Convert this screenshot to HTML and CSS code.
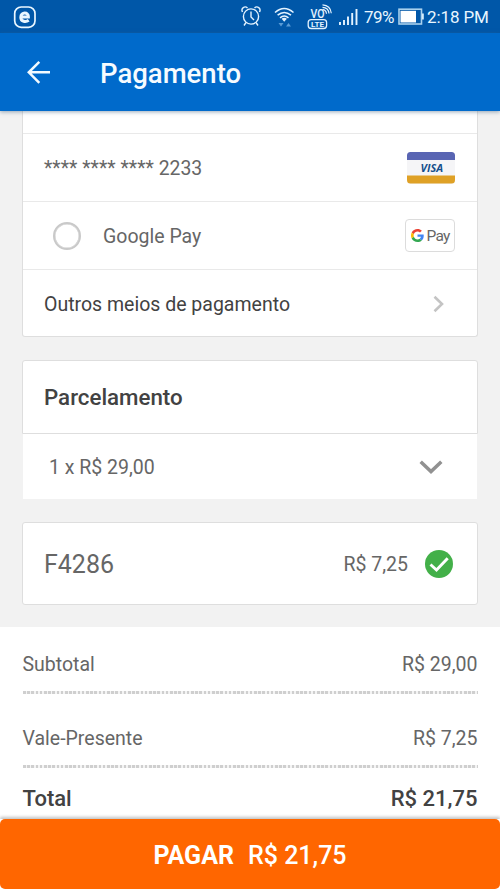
FILE: index.html
```html
<!DOCTYPE html>
<html lang="pt-BR">
<head>
<meta charset="utf-8">
<title>Pagamento</title>
<link rel="stylesheet" href="styles.css">
</head>
<body>
<div class="screen">
  <div class="status">
    <svg class="app-icon" width="24" height="24" viewBox="0 0 24 24" fill="none" stroke="#eaf7ff"><rect x="1.700" y="2" width="20.300" height="20.300" rx="6.500" stroke-width="1.700"/><path d="M8.300 12H15.400C15.700 6.600 7.800 6.700 7.800 12.200C7.800 17 12.900 17.300 15.700 15.300" stroke-width="3"/></svg>
    <svg class="status-icons" width="122" height="33" viewBox="0 0 122 33" fill="none" stroke="#e4f3ff" stroke-width="1.4">
      <circle cx="12" cy="16.5" r="7.6"/><path d="M12 11.5V17l3 3M3.5 12C1.5 8 6 5.500 8.500 8M20.500 12C22.500 8 18 5.500 15.500 8M7 22.500l-2 3M17 22.500l2 3"/>
      <path d="M36 12.500Q45.200 4.500 54.500 12.500M38.600 15.200Q45.200 9.700 52 15.200M41 17.800Q45.200 14.400 49.500 17.800" stroke-width="1.500"/><path d="M42.600 18.700Q45.200 17 47.900 18.700L45.200 21.700z" fill="#e4f3ff" stroke="none"/><path d="M39.500 23h5L42 26.500zM47 26.500h5L49.500 23z" fill="#5a9bd5" stroke="none"/>
      <text class="volte-top" x="71.500" y="18.200" textLength="14" lengthAdjust="spacingAndGlyphs">VO</text>
      <path d="M83.500 9.700q3.500 0 4 4M83.500 7.300q6 .3 6.500 6.200M83.500 4.900q8 .5 8.800 8.300" stroke-width="1.200"/>
      <rect x="69.200" y="19.600" width="18.400" height="8.900" rx="3" stroke-width="1.300"/><text class="volte-bottom" x="72" y="27.100" textLength="13" lengthAdjust="spacingAndGlyphs">LTE</text>
      <path d="M101 22v3M105 20v5M109 16.500v8.500M113.200 13v12M117.500 9v16" stroke-width="1.900"/>
    </svg>
    <span class="percent">79%</span>
    <svg class="battery" width="27" height="18" viewBox="0 0 27 18"><rect x="1" y="1.200" width="22.500" height="14.800" fill="none" stroke="#a9d1ed" stroke-width="1.600"/><rect x="2.500" y="2.800" width="15.500" height="11.700" fill="#fff"/><path d="M24 5.500h1.800v6H24z" fill="#d6edfc"/></svg>
    <span class="time">2:18 PM</span>
  </div>
  <header class="appbar">
    <svg class="back" width="24" height="24" viewBox="0 0 24 24" fill="none" stroke="#f2faff" stroke-width="2.500"><path d="M23 12.300H2M12.300 1.800L1.800 12.300 12.300 22.800"/></svg>
    <h1 class="title">Pagamento</h1>
  </header>
  <main class="content">
    <section class="card methods">
      <div class="row stub"></div>
      <div class="row"><span class="mask">**** **** **** 2233</span>
        <svg class="visa" width="48" height="32" viewBox="0 0 48 32"><rect width="48" height="32" rx="3.500" fill="#f5f5f7"/><path d="M0 8V3.500A3.500 3.500 0 0 1 3.500 0h41A3.500 3.500 0 0 1 48 3.500V8z" fill="#5965b3"/><path d="M0 23.500v4.500A3.500 3.500 0 0 0 3.500 31.500h41a3.500 3.500 0 0 0 3.500-3.500v-4.500z" fill="#dfa126"/><text class="visa-text" x="13.500" y="19.700" textLength="22.500" lengthAdjust="spacingAndGlyphs">VISA</text></svg>
      </div>
      <div class="row"><span class="radio"></span><span class="gpay-label">Google Pay</span>
        <span class="gpay"><svg width="13" height="13" viewBox="0 0 48 48"><path fill="#ea4335" d="M24 9.500c3.540 0 6.710 1.220 9.210 3.600l6.850-6.850C35.900 2.380 30.470 0 24 0 14.620 0 6.510 5.380 2.560 13.220l7.980 6.190C12.430 13.720 17.740 9.500 24 9.500z"/><path fill="#4285f4" d="M46.980 24.550c0-1.570-.15-3.090-.38-4.550H24v9.020h12.940c-.58 2.960-2.260 5.480-4.780 7.180l7.730 6c4.510-4.180 7.090-10.360 7.090-17.650z"/><path fill="#fbbc05" d="M10.530 28.590c-.48-1.450-.76-2.990-.76-4.590s.27-3.140.76-4.590l-7.980-6.190C.92 16.460 0 20.120 0 24s.92 7.540 2.560 10.780z"/><path fill="#34a853" d="M24 48c6.480 0 11.930-2.130 15.890-5.810l-7.730-6c-2.150 1.450-4.920 2.300-8.160 2.300-6.260 0-11.570-4.220-13.470-9.910l-7.980 6.190C6.510 42.620 14.620 48 24 48z"/></svg><span class="gpay-word">Pay</span></span>
      </div>
      <div class="row other"><span class="other-label">Outros meios de pagamento</span>
        <svg class="next" width="12" height="18" viewBox="0 0 12 18" fill="none" stroke="#c4c4c4" stroke-width="2.600"><path d="M1.500 1.700L9 9l-7.500 7.300"/></svg>
      </div>
    </section>
    <section class="installments">
      <div class="card heading"><h2 class="h2">Parcelamento</h2></div>
      <div class="select"><span class="choice">1 x R$ 29,00</span>
        <svg width="24" height="16" viewBox="0 0 24 16" fill="none" stroke="#919191" stroke-width="3.500"><path d="M1.700 2.700l10.300 9.800L22.300 2.700"/></svg>
      </div>
    </section>
    <section class="card voucher">
      <span class="code">F4286</span><span class="value">R$ 7,25</span>
      <svg width="28" height="28" viewBox="0 0 28 28"><circle cx="14" cy="14" r="14" fill="#43b049"/><path d="M5.500 14.500l6 5.500L22.700 8.200" fill="none" stroke="#fff" stroke-width="2.900"/></svg>
    </section>
    <section class="totals">
      <div class="line first"><span class="sub">Subtotal</span><span class="amount">R$ 29,00</span></div>
      <div class="dots"></div>
      <div class="line second"><span class="vale">Vale-Presente</span><span class="amount">R$ 7,25</span></div>
      <div class="dots"></div>
      <div class="line total"><span class="tot">Total</span><span class="tot-amount">R$ 21,75</span></div>
    </section>
  </main>
  <div class="footer"><button class="pay"><b class="pay-word">PAGAR</b><span class="pay-value">R$ 21,75</span></button></div>
</div>
</body>
</html>
```
FILE: styles.css
```css
* { box-sizing: border-box; }
body { margin: 0; font-family: Roboto, sans-serif; color: #666; background: #f2f2f2; }
svg { display: block; flex: none; }
.screen { width: 500px; height: 889px; overflow: hidden; display: flex; flex-direction: column; }
.status { height: 33px; flex: none; background: #0057a8; display: flex; align-items: center; color: #e9f6ff; }
.app-icon { margin-left: 13px; }
.status-icons { margin-left: 202px; }
.volte-top { font: 500 13px Roboto, sans-serif; fill: #e4f3ff; stroke: none; }
.volte-bottom { font: 700 8px Roboto, sans-serif; fill: #e4f3ff; stroke: none; }
.percent { font-size: 17px; width: 32px; margin-left: 3px; margin-top: 1px; letter-spacing: -.6px; }
.battery { margin-left: 2px; margin-top: 1px; }
.time { font-size: 17px; margin-left: 2px; margin-top: 1px; white-space: nowrap; letter-spacing: -.1px; }
.appbar { height: 78px; flex: none; background: #006acb; display: flex; align-items: center; z-index: 1; box-shadow: 0 1px 4px #40608088; }
.back { margin-left: 27px; margin-top: -1px; }
.title { margin: 3px 0 0 49px; font-size: 27.5px; font-weight: 500; color: #f6fbff; }
.content { flex: 1; min-height: 0; overflow: hidden; }
.card { margin: 0 22px; background: #fff; border: 1px solid #dedede; border-radius: 3px; }
.methods { border-top: 0; border-radius: 0 0 3px 3px; height: 226px; }
.row { height: 68px; padding: 0 22px 0 21px; display: flex; align-items: center; justify-content: space-between; border-bottom: 1px solid #e9e9e9; font-size: 19.5px; }
.mask, .gpay-label, .other-label, .choice, .code, .value { padding-top: 2px; }
.stub { height: 23px; }
.other { height: 66px; border: 0; color: #424242; }
.mask { font-size: 19.4px; }
.next { margin-right: 10px; margin-top: 1px; }
.radio { width: 28px; height: 28px; border: 2.5px solid #c9c9c9; border-radius: 50%; margin-left: 9px; box-shadow: inset 0 0 0 .5px #c9c9c9; }
.gpay-label { flex: 1; margin-left: 22px; }
.visa-text { font: italic 700 11px "Open Sans", sans-serif; fill: #15508c; }
.gpay { width: 50px; height: 33px; border: 1px solid #dcdcdc; border-radius: 4px; display: flex; align-items: center; justify-content: center; gap: 3px; font-size: 15.5px; letter-spacing: -.8px; }
.installments { margin-top: 23px; }
.heading { height: 74px; border-radius: 3px 3px 0 0; padding-left: 21px; display: flex; align-items: center; }
.h2 { margin: 0; font-size: 22.3px; font-weight: 500; color: #424242; }
.select { height: 65px; margin: 0 23px; padding: 0 34px 0 26px; background: #fff; display: flex; align-items: center; justify-content: space-between; font-size: 19.5px; }
.voucher { margin-top: 23px; height: 83px; display: flex; align-items: center; padding: 0 24px 0 21px; }
.code { font-size: 25px; flex: 1; }
.value { font-size: 19.5px; margin-right: 17px; }
.totals { margin-top: 22px; padding: 0 22.5px; background: #fff; height: 262px; }
.line { height: 71px; display: flex; align-items: center; justify-content: space-between; font-size: 19.5px; }
.first { height: 64px; padding-top: 11px; }
.second { padding-top: 17px; }
.dots { height: 3px; background: repeating-linear-gradient(90deg, #cfcfcf 0 2.6px, #f4f4f4 2.6px 4.2px); }
.total { height: 61px; font-size: 22px; font-weight: 500; color: #424242; }
.footer { flex: none; height: 70px; background: #fff; z-index: 1; box-shadow: 0 -2px 3px #0000003d; }
.pay { width: 100%; height: 70px; border: 0; padding: 3px 0 0; border-radius: 5px; background: #f60; color: #fff; font: 500 25px Roboto, sans-serif; display: flex; align-items: center; justify-content: center; gap: 14px; }
```
